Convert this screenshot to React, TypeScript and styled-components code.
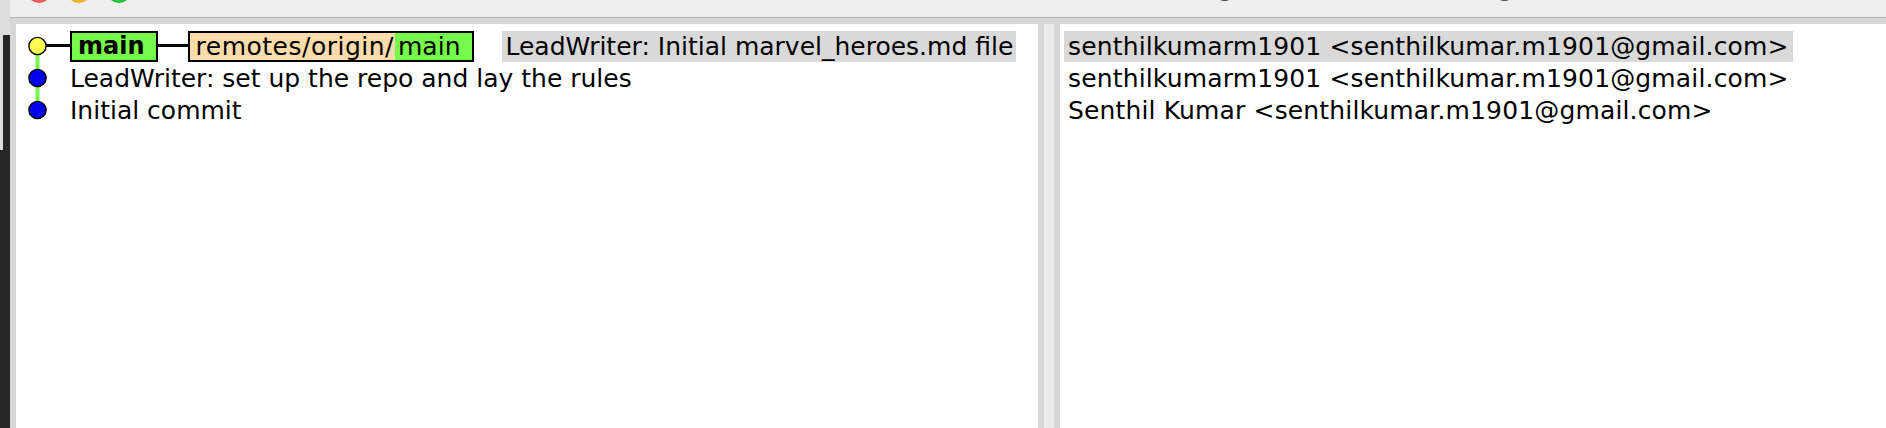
import React from "react";
import styled, { createGlobalStyle } from "styled-components";

const GlobalStyle = createGlobalStyle`
  html, body {
    margin: 0;
    padding: 0;
    background: #ffffff;
  }
  body {
    font-family: "DejaVu Sans", "Liberation Sans", sans-serif;
  }
`;

const Screen = styled.div`
  width: 1886px;
  height: 428px;
  display: flex;
  overflow: hidden;
`;

const Backdrop = styled.div`
  width: 10px;
  flex-shrink: 0;
  display: flex;
`;

const BackdropColumn = styled.div<{ $width: number; $light: number }>`
  width: ${(p) => p.$width}px;
  background: linear-gradient(
    to bottom,
    #dddddd 0 ${(p) => p.$light}px,
    #262626 ${(p) => p.$light}px
  );
`;

const Window = styled.div`
  flex: 1;
  min-width: 0;
  display: flex;
  flex-direction: column;
`;

const TitleBar = styled.div`
  height: 17px;
  flex-shrink: 0;
  background: #efefef;
  border-bottom: 1px solid #b2b2b2;
  display: flex;
  align-items: flex-start;
  padding-left: 16.5px;
  overflow: hidden;
`;

const Lights = styled.div`
  display: flex;
  gap: 16px;
  margin-top: -21px;
`;

const Light = styled.span<{ $color: string }>`
  width: 24px;
  height: 24px;
  border-radius: 50%;
  background: ${(p) => p.$color};
  box-shadow: inset 0 0 0 1px rgba(0, 0, 0, 0.12);
`;

const Title = styled.span`
  margin-left: 1087px;
  margin-top: -25px;
  font-size: 25.6px;
  line-height: 25.6px;
  color: #4a4a4a;
  white-space: nowrap;
`;

const Body = styled.div`
  flex: 1;
  min-height: 0;
  background: #d7d7d7;
  padding: 6px 0 0 6px;
  display: flex;
`;

const CommitPane = styled.div`
  width: 1022px;
  flex-shrink: 0;
  background: #ffffff;
  padding-top: 6px;
`;

const Sash = styled.div`
  width: 10px;
  flex-shrink: 0;
  background: #ebebeb;
  border-left: 6px solid #d7d7d7;
  border-right: 6px solid #d7d7d7;
`;

const AuthorPane = styled.div`
  flex: 1;
  background: #ffffff;
  padding: 6px 0 0 4px;
`;

const Row = styled.div`
  height: 32px;
  display: flex;
  align-items: center;
  font-size: 25px;
  line-height: 32px;
  color: #000000;
  white-space: nowrap;
`;

const GraphCell = styled.svg`
  display: block;
  width: 54px;
  height: 32px;
  flex-shrink: 0;
`;

const RefBox = styled.div`
  display: flex;
  height: 27px;
  line-height: 27px;
  border: 2px solid #000000;
  align-self: flex-end;
`;

const RefSegment = styled.span<{
  $bg: string;
  $bold?: boolean;
  $pad: string;
  $size: number;
  $track?: number;
}>`
  background: ${(p) => p.$bg};
  padding: ${(p) => p.$pad};
  font-weight: ${(p) => (p.$bold ? 700 : 400)};
  font-size: ${(p) => p.$size}px;
  letter-spacing: ${(p) => p.$track ?? 0}px;
`;

const Connector = styled.div`
  width: 30px;
  height: 3px;
  background: #000000;
  align-self: flex-start;
  margin-top: 14px;
`;

const Subject = styled.span<{ $selected?: boolean }>`
  align-self: flex-end;
  height: 31px;
  line-height: 31px;
  padding: ${(p) => (p.$selected ? "0 3px" : "0")};
  margin-left: ${(p) => (p.$selected ? "28px" : "0")};
  background: ${(p) => (p.$selected ? "#d9d9d9" : "transparent")};
`;

const Author = styled.span<{ $selected?: boolean }>`
  align-self: flex-end;
  height: 31px;
  line-height: 31px;
  padding: 0 4px;
  letter-spacing: 0.15px;
  background: ${(p) => (p.$selected ? "#d9d9d9" : "transparent")};
`;

const GREEN = "#76fb4c";
const CX = 21.5;
const CY = 16;

type Link = "first" | "middle" | "last";

function Node({ link, color, branch }: { link: Link; color: string; branch?: boolean }) {
  const y1 = link === "first" ? CY : 0;
  const y2 = link === "last" ? CY : 32;
  return (
    <GraphCell viewBox="0 0 54 32">
      <line x1={CX} y1={y1} x2={CX} y2={y2} stroke={GREEN} strokeWidth={4} />
      {branch && <line x1={CX + 8} y1={15.5} x2={54} y2={15.5} stroke="#000" strokeWidth={3} />}
      <circle cx={CX} cy={CY} r={8.6} fill={color} stroke="#000" strokeWidth={1.4} />
    </GraphCell>
  );
}

const authors = [
  "senthilkumarm1901 <senthilkumar.m1901@gmail.com>",
  "senthilkumarm1901 <senthilkumar.m1901@gmail.com>",
  "Senthil Kumar <senthilkumar.m1901@gmail.com>",
];

export default function App() {
  return (
    <>
      <GlobalStyle />
      <Screen>
        <Backdrop>
          <BackdropColumn $width={3} $light={150} />
          <BackdropColumn $width={7} $light={35} />
        </Backdrop>
        <Window>
          <TitleBar>
            <Lights>
              <Light $color="#fe5f57" />
              <Light $color="#febc2e" />
              <Light $color="#28c840" />
            </Lights>
            <Title>gitk: marvel heroes log</Title>
          </TitleBar>
          <Body>
            <CommitPane>
              <Row>
                <Node link="first" color="#fffc4f" branch />
                <RefBox>
                  <RefSegment $bg={GREEN} $bold $size={24} $pad="0 11px 0 6px">
                    main
                  </RefSegment>
                </RefBox>
                <Connector />
                <RefBox>
                  <RefSegment $bg="#fddcab" $size={25} $track={0.5} $pad="0 1px 0 6px">
                    remotes/origin/
                  </RefSegment>
                  <RefSegment $bg={GREEN} $size={25} $pad="0 12px 0 3px">
                    main
                  </RefSegment>
                </RefBox>
                <Subject $selected>LeadWriter: Initial marvel_heroes.md file</Subject>
              </Row>
              <Row>
                <Node link="middle" color="#0000f5" />
                <Subject>LeadWriter: set up the repo and lay the rules</Subject>
              </Row>
              <Row>
                <Node link="last" color="#0000f5" />
                <Subject>Initial commit</Subject>
              </Row>
            </CommitPane>
            <Sash />
            <AuthorPane>
              {authors.map((a, i) => (
                <Row key={i}>
                  <Author $selected={i === 0}>{a}</Author>
                </Row>
              ))}
            </AuthorPane>
          </Body>
        </Window>
      </Screen>
    </>
  );
}
